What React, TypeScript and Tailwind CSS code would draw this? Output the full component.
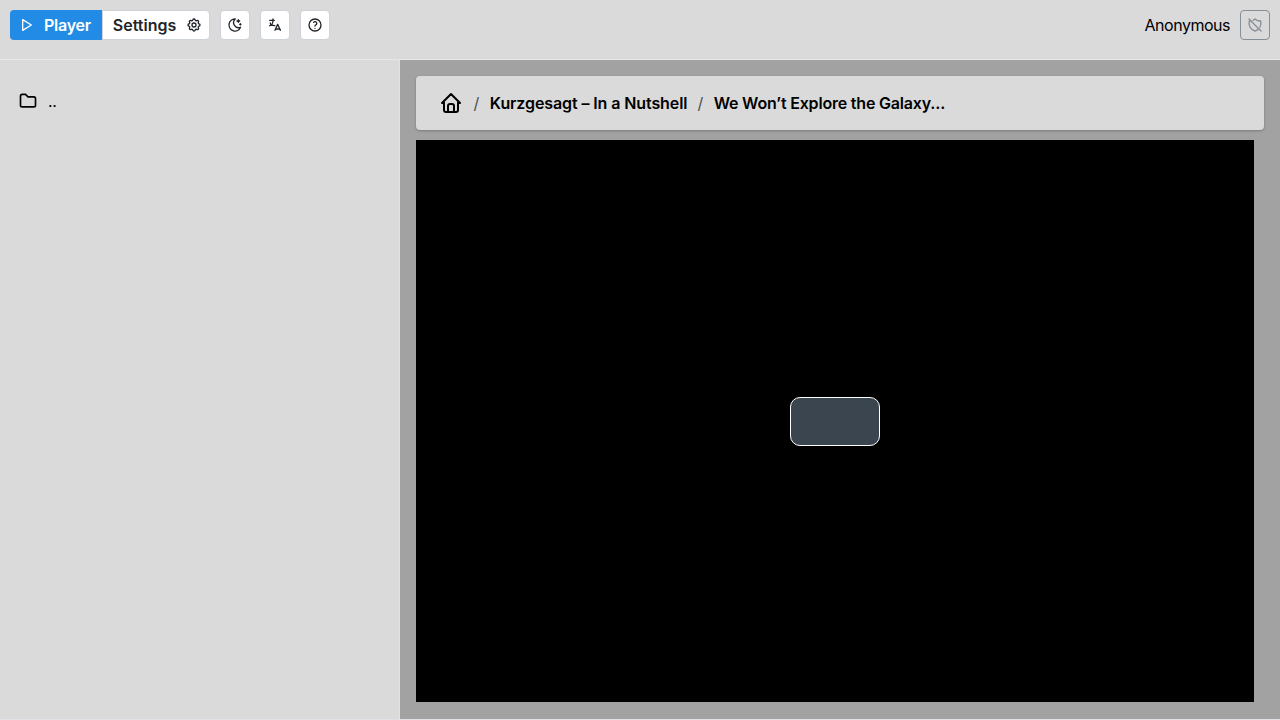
import { TbHome, TbFolder, TbShieldOff, TbPlayerPlay, TbSettings, TbMoonStars, TbHelp } from "react-icons/tb";

const iconButton =
  "flex size-[30px] items-center justify-center rounded border border-[#ced4da] bg-white text-[#212529]";

function LanguageIcon() {
  return (
    <svg
      width="16"
      height="16"
      viewBox="0 0 24 24"
      fill="none"
      stroke="currentColor"
      strokeWidth="2"
      strokeLinecap="round"
      strokeLinejoin="round"
    >
      <path d="M4 5h7" />
      <path d="M9 3v2c0 4.418 -2.239 8 -5 8" />
      <path d="M5 9c-.003 2.144 2.952 3.908 6.7 4" />
      <path d="M12 20l4 -9l4 9" />
      <path d="M19.1 18h-6.2" />
    </svg>
  );
}

function Header() {
  return (
    <header className="flex h-[60px] items-start justify-between border-b border-[#e5e6e8] p-2.5">
      <div className="flex gap-2.5">
        <div className="flex h-[30px] text-base font-semibold">
          <button className="flex w-[92px] items-center rounded-l bg-[#228be6] pl-2 text-white">
            <TbPlayerPlay size={16} />
            <span className="ml-2.5 tracking-[-0.25px]">Player</span>
          </button>
          <button className="flex w-[108px] items-center rounded-r border border-[#ced4da] bg-white pl-[9.5px] text-[#212529]">
            <span className="w-[64px] whitespace-nowrap">Settings</span>
            <TbSettings size={16} className="ml-[9.5px]" />
          </button>
        </div>
        <button className={iconButton}><TbMoonStars size={16} /></button>
        <button className={iconButton}><LanguageIcon /></button>
        <button className={iconButton}><TbHelp size={16} /></button>
      </div>
      <div className="flex items-center gap-2.5">
        <span className="tracking-[-0.48px]">Anonymous</span>
        <button className="flex size-[30px] items-center justify-center rounded border border-[#868e96] text-[#868e96]">
          <TbShieldOff size={16} />
        </button>
      </div>
    </header>
  );
}

function Breadcrumbs() {
  return (
    <nav className="flex h-[54px] items-center rounded bg-[#dadada] px-[23px] font-semibold shadow-[0_1px_3px_rgba(0,0,0,0.15),0_1px_2px_rgba(0,0,0,0.1)]">
      <TbHome size={24} />
      <span className="mr-[10.5px] ml-[10.5px] font-normal text-[#495057]">/</span>
      <span className="tracking-[-0.1px]">Kurzgesagt – In a Nutshell</span>
      <span className="mr-[10.3px] ml-[10.3px] font-normal text-[#495057]">/</span>
      <span className="tracking-[-0.19px]">We Won’t Explore the Galaxy...</span>
    </nav>
  );
}

export default function App() {
  return (
    <div className="flex h-[720px] w-[1280px] flex-col overflow-hidden bg-[#dadada] font-['Inter',sans-serif] text-base text-black">
      <Header />
      <div className="flex min-h-0 flex-1 border-b border-[#dee2e6]">
        <aside className="w-[400px] border-r border-[#dee2e6] px-[18px] pt-[29px]">
          <div className="flex items-center gap-2.5">
            <TbFolder size={20} />
            <span className="tracking-[-0.4px]">..</span>
          </div>
        </aside>
        <main className="flex flex-1 flex-col gap-2.5 bg-[#a2a2a2] p-4">
          <Breadcrumbs />
          <div className="flex h-[562px] w-[838px] items-center justify-center bg-black">
            <div className="h-[49px] w-[90px] rounded-[10px] border border-white bg-[#3b4550]" />
          </div>
        </main>
      </div>
    </div>
  );
}
